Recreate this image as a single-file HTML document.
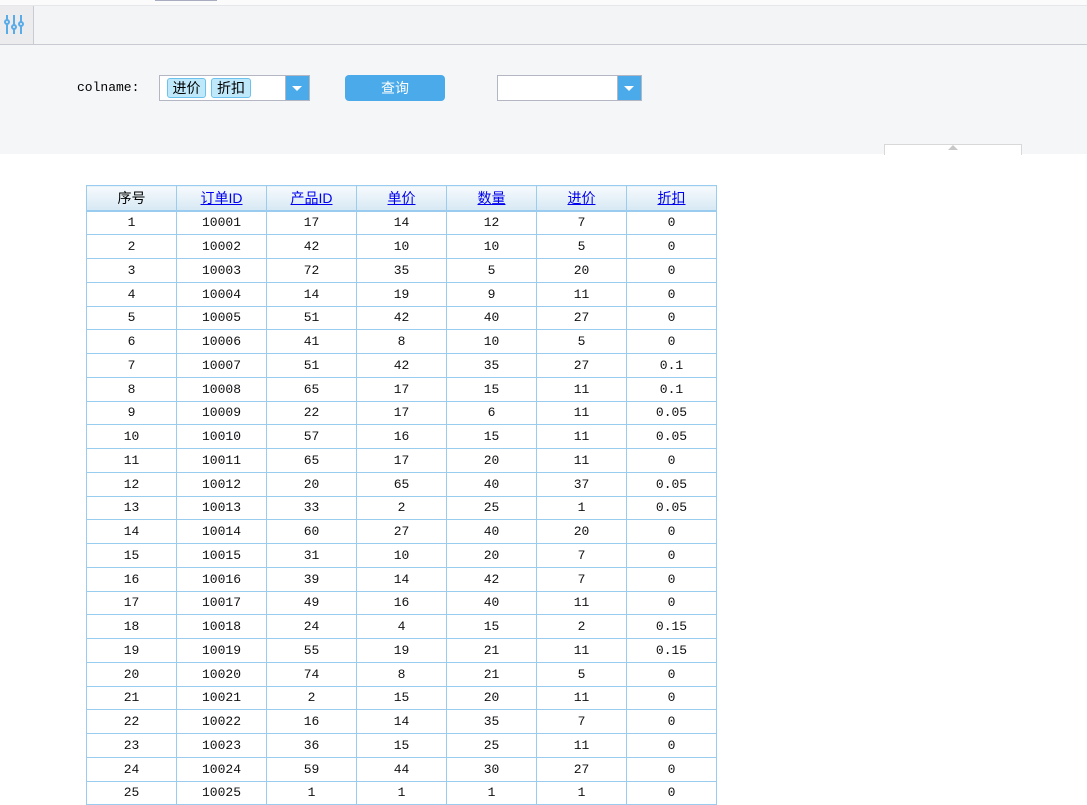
<!DOCTYPE html>
<html><head><meta charset="utf-8"><style>
body{margin:0;width:1087px;height:786px;overflow:hidden;background:#fff;font-family:"Liberation Mono","Noto Sans CJK SC",monospace;font-size:13px;position:relative}
.abs{position:absolute}
table{border-collapse:collapse;table-layout:fixed;position:absolute;left:86px;top:185px}
td{width:89px;border:1px solid #99ccee;text-align:center;height:22.75px;padding:0;color:#111}
th{border:1px solid #99ccee;height:23.5px;padding:0;font-weight:normal;background:linear-gradient(#f6fafd,#d6e8f3);border-bottom:2px solid #99ccee;font-family:"Liberation Sans","Noto Sans CJK SC",sans-serif;font-size:14px}
th a{color:#00e;text-decoration:underline}
</style></head><body>
<div class="abs" style="left:0;top:0;width:1087px;height:5px;background:#fbfbfc"></div>
<div class="abs" style="left:155px;top:0;width:62px;height:1px;background:#a8acc0"></div>
<div class="abs" style="left:0;top:5px;width:1087px;height:38px;background:#f3f4f6;border-top:1px solid #e6e7ea;border-bottom:1px solid #c9cbd2"></div>
<div class="abs" style="left:0;top:6px;width:33px;height:38px;background:#ececee;border-right:1px solid #c9cbd2"></div>
<svg class="abs" style="left:4px;top:14px" width="22" height="22" viewBox="0 0 22 22" stroke="#5aace8" stroke-width="2" fill="none">
<line x1="3" y1="1" x2="3" y2="20"/><line x1="10" y1="1" x2="10" y2="20"/><line x1="17" y1="1" x2="17" y2="20"/>
<circle cx="3" cy="8" r="2" fill="#ececee"/><circle cx="10" cy="13" r="2" fill="#ececee"/><circle cx="17" cy="10" r="2" fill="#ececee"/></svg>
<div class="abs" style="left:0;top:45px;width:1087px;height:109px;background:#f5f6f8"></div>
<div class="abs" style="left:77px;top:80px;font-size:13px">colname:</div>
<div class="abs" style="left:159px;top:75px;width:125px;height:24px;background:#fff;border:1px solid #b4b6c4;border-right:none"></div>
<div class="abs" style="left:167px;top:78px;width:37px;height:18px;background:#bfe9fb;border:1px solid #6cc2ec;border-radius:3px;font-family:'Noto Sans CJK SC',sans-serif;font-size:14px;line-height:18px;text-align:center">进价</div>
<div class="abs" style="left:211px;top:78px;width:38px;height:18px;background:#bfe9fb;border:1px solid #6cc2ec;border-radius:3px;font-family:'Noto Sans CJK SC',sans-serif;font-size:14px;line-height:18px;text-align:center">折扣</div>
<div class="abs" style="left:285px;top:75px;width:23px;height:24px;background:#4aaaea;border:1px solid #b4b6c4"></div>
<div class="abs" style="left:292px;top:86px;border-left:5px solid transparent;border-right:5px solid transparent;border-top:5px solid #fff"></div>
<div class="abs" style="left:345px;top:75px;width:100px;height:26px;background:#4aaaea;border-radius:4px;color:#fff;font-family:'Noto Sans CJK SC',sans-serif;font-size:14px;line-height:26px;text-align:center">查询</div>
<div class="abs" style="left:497px;top:75px;width:120px;height:24px;background:#fff;border:1px solid #b4b6c4"></div>
<div class="abs" style="left:617px;top:75px;width:23px;height:24px;background:#4aaaea;border:1px solid #b4b6c4"></div>
<div class="abs" style="left:624px;top:86px;border-left:5px solid transparent;border-right:5px solid transparent;border-top:5px solid #fff"></div>
<div class="abs" style="left:884px;top:144px;width:136px;height:10px;background:#fff;border:1px solid #d8d8d8;border-bottom:none"></div>
<div class="abs" style="left:948px;top:145px;border-left:5px solid transparent;border-right:5px solid transparent;border-bottom:5px solid #c8c8c8"></div>
<table>
<tr><th>序号</th><th><a>订单ID</a></th><th><a>产品ID</a></th><th><a>单价</a></th><th><a>数量</a></th><th><a>进价</a></th><th><a>折扣</a></th></tr>
<tr><td>1</td><td>10001</td><td>17</td><td>14</td><td>12</td><td>7</td><td>0</td></tr>
<tr><td>2</td><td>10002</td><td>42</td><td>10</td><td>10</td><td>5</td><td>0</td></tr>
<tr><td>3</td><td>10003</td><td>72</td><td>35</td><td>5</td><td>20</td><td>0</td></tr>
<tr><td>4</td><td>10004</td><td>14</td><td>19</td><td>9</td><td>11</td><td>0</td></tr>
<tr><td>5</td><td>10005</td><td>51</td><td>42</td><td>40</td><td>27</td><td>0</td></tr>
<tr><td>6</td><td>10006</td><td>41</td><td>8</td><td>10</td><td>5</td><td>0</td></tr>
<tr><td>7</td><td>10007</td><td>51</td><td>42</td><td>35</td><td>27</td><td>0.1</td></tr>
<tr><td>8</td><td>10008</td><td>65</td><td>17</td><td>15</td><td>11</td><td>0.1</td></tr>
<tr><td>9</td><td>10009</td><td>22</td><td>17</td><td>6</td><td>11</td><td>0.05</td></tr>
<tr><td>10</td><td>10010</td><td>57</td><td>16</td><td>15</td><td>11</td><td>0.05</td></tr>
<tr><td>11</td><td>10011</td><td>65</td><td>17</td><td>20</td><td>11</td><td>0</td></tr>
<tr><td>12</td><td>10012</td><td>20</td><td>65</td><td>40</td><td>37</td><td>0.05</td></tr>
<tr><td>13</td><td>10013</td><td>33</td><td>2</td><td>25</td><td>1</td><td>0.05</td></tr>
<tr><td>14</td><td>10014</td><td>60</td><td>27</td><td>40</td><td>20</td><td>0</td></tr>
<tr><td>15</td><td>10015</td><td>31</td><td>10</td><td>20</td><td>7</td><td>0</td></tr>
<tr><td>16</td><td>10016</td><td>39</td><td>14</td><td>42</td><td>7</td><td>0</td></tr>
<tr><td>17</td><td>10017</td><td>49</td><td>16</td><td>40</td><td>11</td><td>0</td></tr>
<tr><td>18</td><td>10018</td><td>24</td><td>4</td><td>15</td><td>2</td><td>0.15</td></tr>
<tr><td>19</td><td>10019</td><td>55</td><td>19</td><td>21</td><td>11</td><td>0.15</td></tr>
<tr><td>20</td><td>10020</td><td>74</td><td>8</td><td>21</td><td>5</td><td>0</td></tr>
<tr><td>21</td><td>10021</td><td>2</td><td>15</td><td>20</td><td>11</td><td>0</td></tr>
<tr><td>22</td><td>10022</td><td>16</td><td>14</td><td>35</td><td>7</td><td>0</td></tr>
<tr><td>23</td><td>10023</td><td>36</td><td>15</td><td>25</td><td>11</td><td>0</td></tr>
<tr><td>24</td><td>10024</td><td>59</td><td>44</td><td>30</td><td>27</td><td>0</td></tr>
<tr><td>25</td><td>10025</td><td>1</td><td>1</td><td>1</td><td>1</td><td>0</td></tr>
</table>
</body></html>
